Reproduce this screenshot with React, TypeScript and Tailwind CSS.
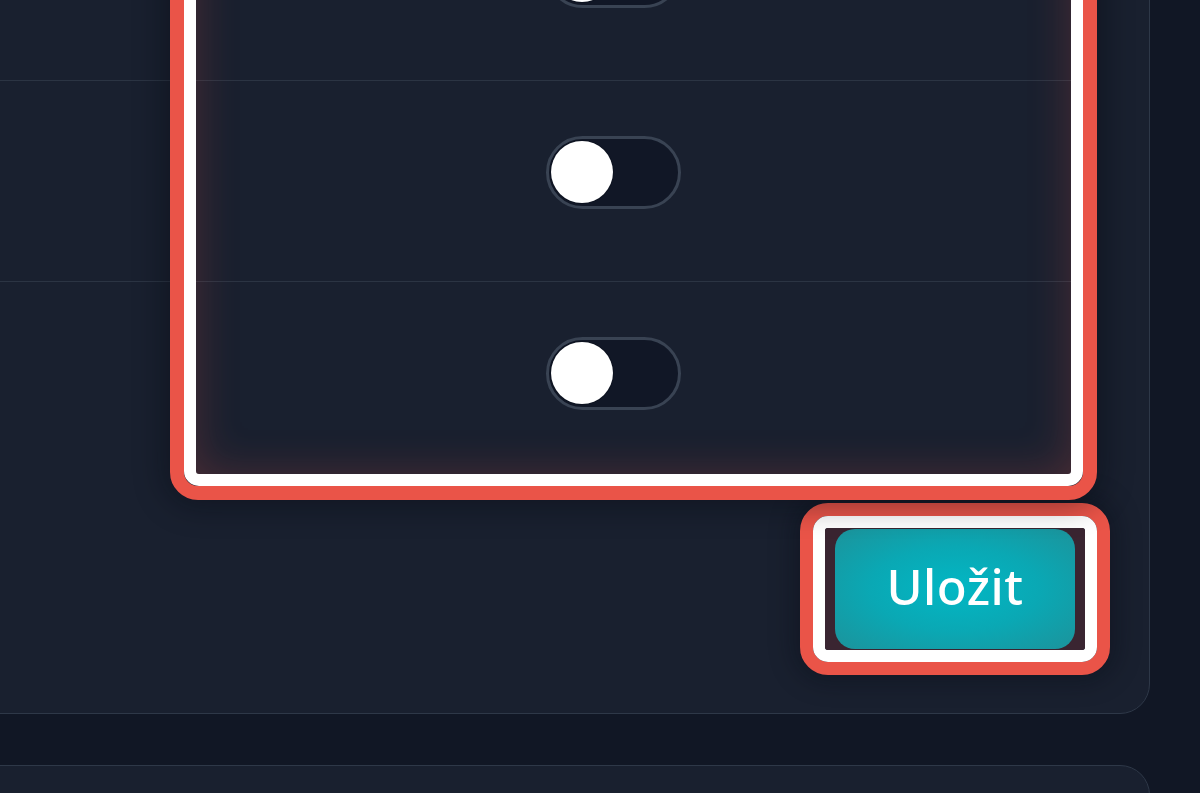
import React from "react";

function Toggle() {
  return (
    <div className="flex h-[73px] w-[135px] items-center rounded-full border-[3px] border-[#394353] bg-[#111726] px-[2px]">
      <div className="h-[62px] w-[62px] rounded-full bg-white ring-1 ring-[#0d1320]" />
    </div>
  );
}

function Row({ last }: { last?: boolean }) {
  return (
    <div
      className={
        "flex " + (last ? "h-[200px]" : "h-[201px] border-b border-[#2b3443]")
      }
    >
      <div className="w-[235px] shrink-0" />
      <div className="flex flex-1 items-center justify-center pb-[18px] pr-[44px]">
        <Toggle />
      </div>
    </div>
  );
}

export default function App() {
  return (
    <div
      className="h-[793px] w-[1200px] overflow-hidden bg-[#111725]"
      style={{ fontFamily: '"Noto Sans", Inter, sans-serif' }}
    >
      <div className="ml-[-60px] mt-[-145px] w-[1210px] rounded-[30px] border border-[#2e3848] bg-[#19202f] pb-[38px] pl-[20px] pr-[74px] pt-[24px]">
        <div className="relative">
          <Row />
          <Row />
          <Row last />
          <div className="pointer-events-none absolute bottom-[-18px] left-[209px] right-[-22px] top-[34px] rounded-[28px] border-[14px] border-[#ea5448] shadow-[0_0_30px_6px_rgba(5,8,16,0.4)]">
            <div className="h-full w-full rounded-[15px] border-[12px] border-white">
              <div className="h-full w-full rounded-[3px] shadow-[inset_0_0_44px_rgba(234,84,72,0.24)]" />
            </div>
          </div>
        </div>
        <div className="mt-[21px] flex justify-end">
          <div className="-mr-[35px] rounded-[28px] border-[13px] border-[#ea5448] shadow-[0_0_24px_6px_rgba(5,8,16,0.35)]">
            <div className="rounded-[15px] border-[12px] border-white">
              <div className="rounded-[3px] bg-[#3a2531] px-[10px] py-[1px]">
                <button className="flex h-[120px] w-[240px] items-center justify-center rounded-[20px] bg-[radial-gradient(ellipse_at_center,#02b7c4_0%,#0aa8b4_50%,#1c939b_100%)] pb-[4px] text-[49px] font-medium tracking-[0.01em] text-white">
                  Uložit
                </button>
              </div>
            </div>
          </div>
        </div>
      </div>
      <div className="ml-[-60px] mt-[51px] h-[200px] w-[1210px] rounded-[30px] border border-[#2e3848] bg-[#19202f]" />
    </div>
  );
}
